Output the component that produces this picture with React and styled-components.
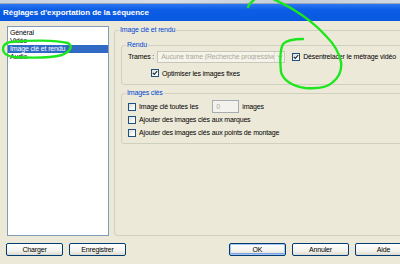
import React from 'react'
import styled, { createGlobalStyle } from 'styled-components'

const GlobalStyle = createGlobalStyle`
  html, body {
    margin: 0;
    padding: 0;
    background: #ECE9D8;
  }
  body {
    font-family: "Liberation Sans", Arial, sans-serif;
    font-size: 7px;
    color: #000;
  }
`

const Viewport = styled.div`
  position: relative;
  width: 400px;
  height: 264px;
  overflow: hidden;
  background: #ECE9D8;
`

const Dialog = styled.div`
  width: 420px;
  display: flex;
  flex-direction: column;
`

const BackStrip = styled.div`
  height: 4px;
  background: linear-gradient(90deg, #C9D2E0 0%, #D9DEE6 40%, #C4CCD8 70%, #D6DBE3 100%);
  border-bottom: 1px solid #9AA8BE;
  box-sizing: border-box;
`

const TitleBar = styled.div`
  height: 17px;
  display: flex;
  align-items: center;
  padding-left: 3px;
  background: linear-gradient(#2C76F2 0%, #0C5DE6 35%, #0A58E0 100%);
  color: #fff;
  font-weight: bold;
  font-size: 8px;
  letter-spacing: -0.05px;
  white-space: nowrap;
`

const Body = styled.div`
  display: flex;
  flex-direction: column;
  padding: 5px 7px 0 7px;
`

const MainRow = styled.div`
  display: flex;
  gap: 5px;
  height: 210px;
`

const List = styled.ul`
  list-style: none;
  margin: 0;
  padding: 2px 0 0 0;
  width: 102px;
  box-sizing: border-box;
  background: #fff;
  border: 1px solid #7F9DB9;
`

const ListItem = styled.li`
  height: 8px;
  line-height: 8px;
  padding-left: 2px;
  letter-spacing: -0.15px;
  white-space: nowrap;
  background: ${p => p.selected ? '#316AC5' : 'transparent'};
  color: ${p => p.selected ? '#fff' : '#000'};
`

const Group = styled.fieldset`
  margin: 0;
  padding: ${p => p.pad || '0 6px'};
  border: 1px solid #D0D0BF;
  border-radius: 3px;
  min-width: 0;
  box-sizing: border-box;
  ${p => p.grow ? 'flex: 1;' : ''}
`

const Legend = styled.legend`
  padding: 0 1px;
  margin-left: ${p => p.shift || 0}px;
  color: #0046D5;
  font-size: 7px;
  line-height: 8px;
  letter-spacing: -0.15px;
  white-space: nowrap;
`

const Stack = styled.div`
  display: flex;
  flex-direction: column;
  gap: ${p => p.gap || 0}px;
`

const Row = styled.div`
  display: flex;
  align-items: center;
  height: ${p => p.h || 13}px;
  margin-top: ${p => p.mt || 0}px;
  padding-left: ${p => p.indent || 0}px;
  white-space: nowrap;
`

const Label = styled.span`
  letter-spacing: -0.15px;
  white-space: nowrap;
  color: ${p => p.disabled ? '#ACA899' : '#000'};
`

const Select = styled.div`
  width: 128px;
  height: 12px;
  box-sizing: border-box;
  border: 1px solid #C9C7BA;
  background: #F5F4EA;
  display: flex;
  align-items: center;
  overflow: hidden;
  margin-left: 3px;
`

const SelectText = styled.span`
  flex: 1;
  padding-left: 3px;
  color: #ACA899;
  letter-spacing: -0.15px;
  white-space: nowrap;
  overflow: hidden;
`

const SelectArrow = styled.span`
  width: 9px;
  height: 10px;
  display: flex;
  align-items: center;
  justify-content: center;
  background: #F2F1EA;
  border-left: 1px solid #E2E0D6;
`

const Box = styled.span`
  width: 8px;
  height: 8px;
  box-sizing: border-box;
  border: 1px solid #1C5180;
  background: linear-gradient(135deg, #DCDBD3 0%, #FFFFFF 80%);
  margin-right: 3px;
  margin-left: ${p => p.ml || 0}px;
  display: inline-flex;
  align-items: center;
  justify-content: center;
  flex-shrink: 0;
`

const TextInput = styled.span`
  width: 27px;
  height: 13px;
  box-sizing: border-box;
  border: 1px solid #A5ACB2;
  background: #F3F2EC;
  color: #ACA899;
  display: inline-flex;
  align-items: center;
  padding-left: 3px;
  margin: 0 3px 0 14px;
`

const ButtonRow = styled.div`
  display: flex;
  align-items: center;
  margin: 7px 0 0 -1px;
  gap: 6px;
`

const Button = styled.div`
  width: 57px;
  height: 13px;
  box-sizing: border-box;
  border: 1px solid #003C74;
  border-radius: 2px;
  background: linear-gradient(#FFFFFF 0%, #F4F3EE 60%, #DDDBD0 100%);
  display: flex;
  align-items: center;
  justify-content: center;
  letter-spacing: -0.15px;
  margin-left: ${p => p.ml || 0}px;
  box-shadow: ${p => p.focused ? 'inset 0 0 0 1px #A8C4F0, inset 0 -1px 0 1px #7BA2E7' : 'none'};
`

const Overlay = styled.svg`
  position: absolute;
  left: 0;
  top: 0;
  pointer-events: none;
`

const Tick = () => (
  <svg width="6" height="6" viewBox="0 0 6 6">
    <path d="M0.8 2.8 L2.3 4.3 L5.2 1.2" fill="none" stroke="#2A2A2A" strokeWidth="1.2" />
  </svg>
)

const Check = ({ checked, ml }) => (
  <Box ml={ml}>
    {checked && <Tick />}
  </Box>
)

const App = () => {
  return (
    <Viewport>
      <GlobalStyle />
      <Dialog>
        <BackStrip />
        <TitleBar>Réglages d'exportation de la séquence</TitleBar>
        <Body>
          <MainRow>
            <List>
              <ListItem>Général</ListItem>
              <ListItem>Vidéo</ListItem>
              <ListItem selected>Image clé et rendu</ListItem>
              <ListItem>Audio</ListItem>
            </List>
            <Group grow pad="7px 6px 0 6px">
              <Legend shift={-2}>Image clé et rendu</Legend>
              <Stack gap={4}>
                <Group pad="0 6px 7px 6px">
                  <Legend shift={-2}>Rendu</Legend>
                  <Row h={13} mt={1}>
                    <Label>Trames :</Label>
                    <Select>
                      <SelectText>Aucune trame (Recherche progressive)</SelectText>
                      <SelectArrow>
                        <svg width="6" height="4" viewBox="0 0 6 4">
                          <path d="M0.5 0.5 L3 3 L5.5 0.5" fill="none" stroke="#B8B6AA" strokeWidth="1" />
                        </svg>
                      </SelectArrow>
                    </Select>
                    <Check checked ml={7} />
                    <Label>Désentrelacer le métrage vidéo</Label>
                  </Row>
                  <Row h={8} mt={6} indent={23}>
                    <Check checked />
                    <Label>Optimiser les images fixes</Label>
                  </Row>
                </Group>
                <Group pad="3px 6px 4px 6px">
                  <Legend shift={-2}>Images clés</Legend>
                  <Row>
                    <Check />
                    <Label>Image clé toutes les</Label>
                    <TextInput>0</TextInput>
                    <Label>images</Label>
                  </Row>
                  <Row>
                    <Check />
                    <Label>Ajouter des images clés aux marques</Label>
                  </Row>
                  <Row>
                    <Check />
                    <Label>Ajouter des images clés aux points de montage</Label>
                  </Row>
                </Group>
              </Stack>
            </Group>
          </MainRow>
          <ButtonRow>
            <Button>Charger</Button>
            <Button>Enregistrer</Button>
            <Button ml={97} focused>OK</Button>
            <Button>Annuler</Button>
            <Button>Aide</Button>
          </ButtonRow>
        </Body>
      </Dialog>
      <Overlay width="400" height="264" viewBox="0 0 400 264">
        <g fill="none" stroke="#1EE61E" strokeWidth="2.4" strokeLinecap="round" strokeLinejoin="round">
          <path d="M12 42 C30 40 55 40 68 43 C73 46 71 51 62 55 C50 58 30 58 14 57 C6 56 3 53 3 49 C3 45 6 43 10 42" />
          <path d="M248 7 C249 4 251 2 254 0" />
          <path d="M303 39 C295 39 287 40 283 44 C280 50 280 62 281 72 C283 80 292 86 305 88 C318 89 328 87 333 82 C339 77 342 70 341 62 C339 52 334 44 326 36 C316 25 304 16 294 10 C286 5 279 2 273 -1" />
        </g>
      </Overlay>
    </Viewport>
  )
}

export default App
